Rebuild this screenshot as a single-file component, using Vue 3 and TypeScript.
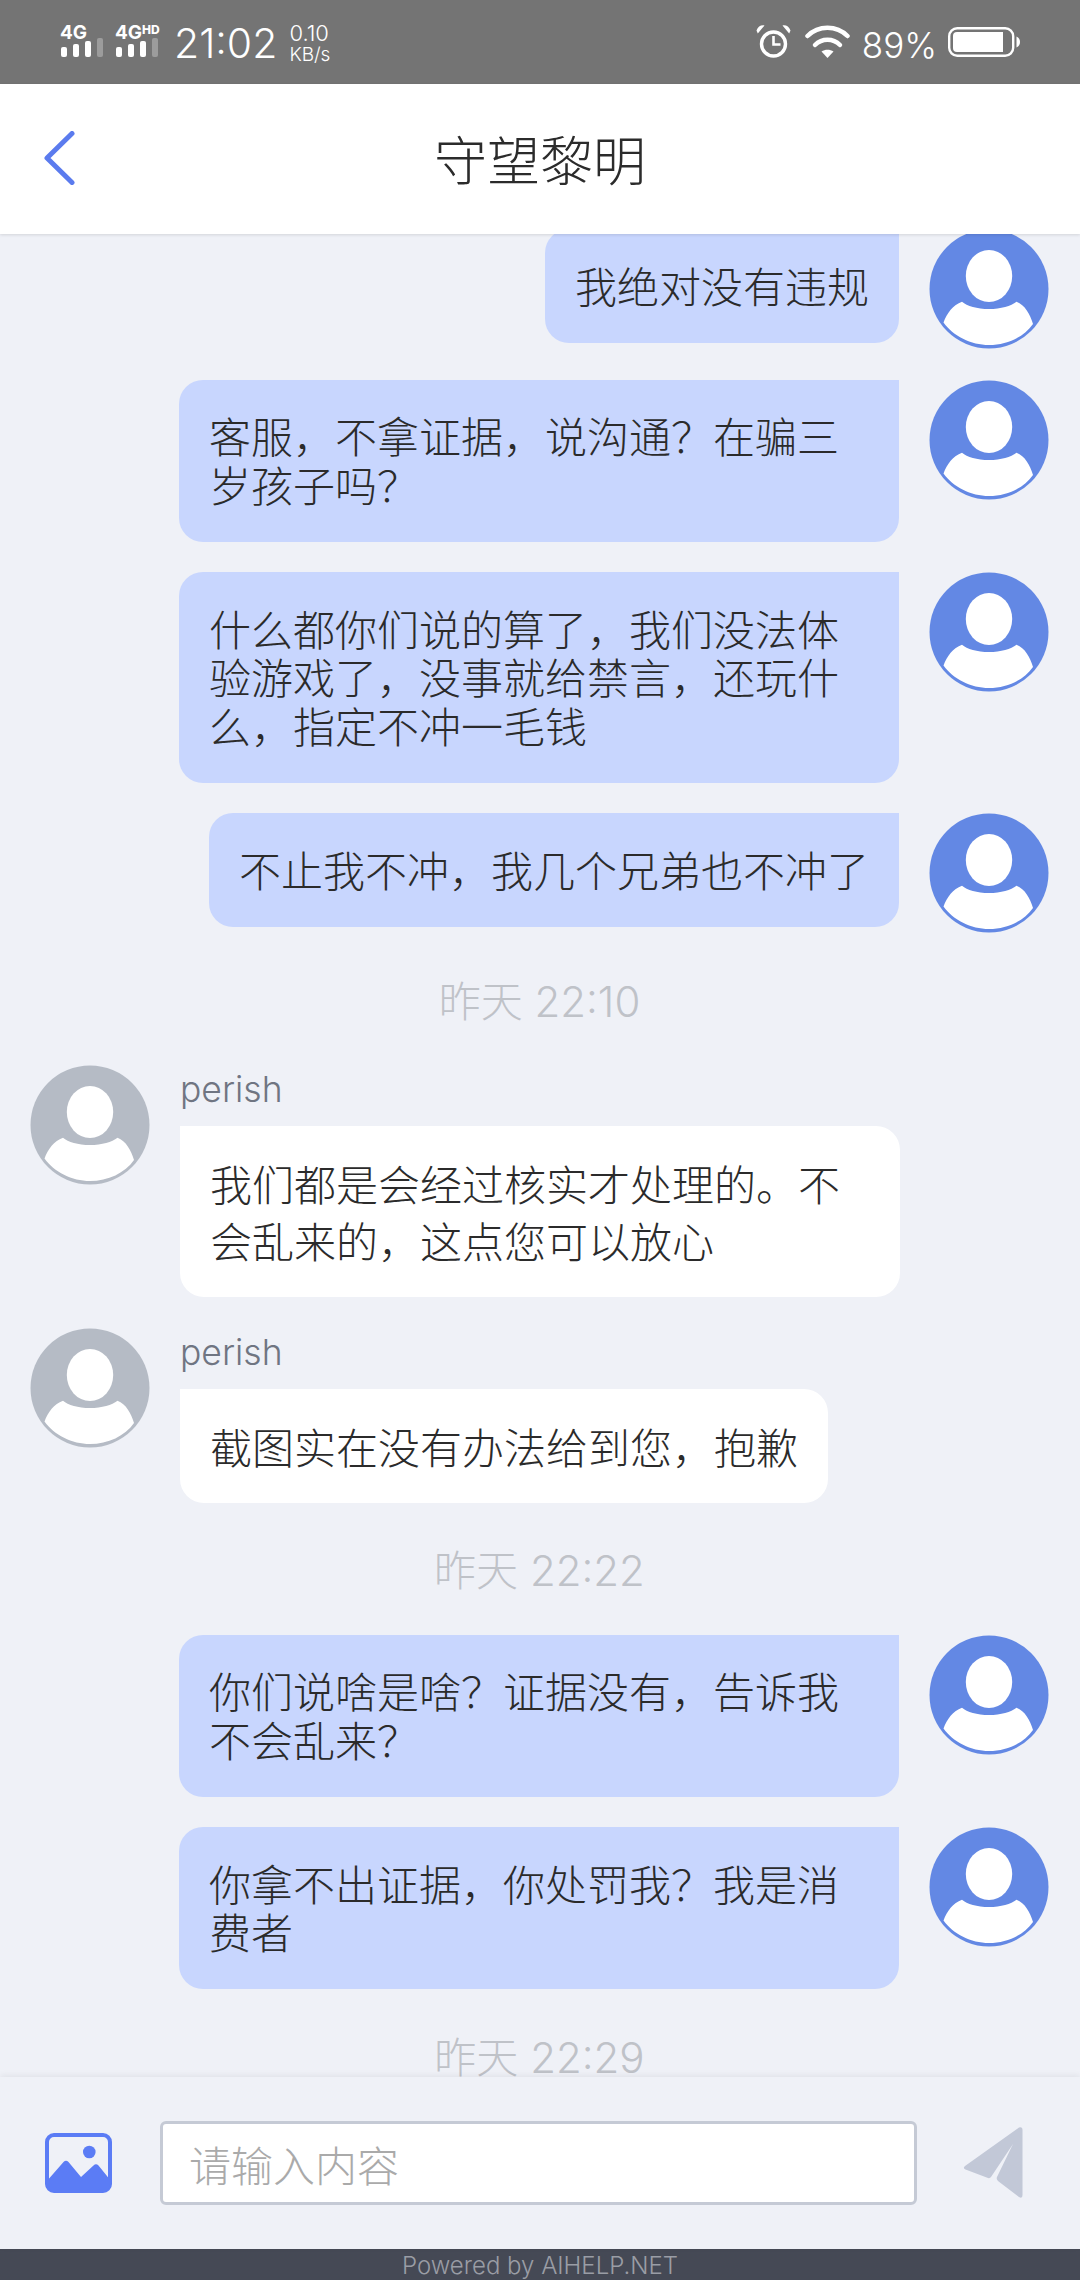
<script setup lang="ts">
interface ChatItem {
  kind: 'me' | 'agent' | 'time'
  text: string
}

const items: ChatItem[] = [
  { kind: 'me', text: '我绝对没有违规' },
  { kind: 'me', text: '客服，不拿证据，说沟通？在骗三岁孩子吗？' },
  { kind: 'me', text: '什么都你们说的算了，我们没法体验游戏了，没事就给禁言，还玩什么，指定不冲一毛钱' },
  { kind: 'me', text: '不止我不冲，我几个兄弟也不冲了' },
  { kind: 'time', text: '昨天 22:10' },
  { kind: 'agent', text: '我们都是会经过核实才处理的。不会乱来的，这点您可以放心' },
  { kind: 'agent', text: '截图实在没有办法给到您，抱歉' },
  { kind: 'time', text: '昨天 22:22' },
  { kind: 'me', text: '你们说啥是啥？证据没有，告诉我不会乱来？' },
  { kind: 'me', text: '你拿不出证据，你处罚我？我是消费者' },
  { kind: 'time', text: '昨天 22:29' },
]

const signals = [
  { label: '4G', sup: '' },
  { label: '4G', sup: 'HD' },
]
</script>

<template>
  <div class="screen">
    <div class="status">
      <div v-for="s in signals" :key="s.label + s.sup" class="signal">
        <div class="net">{{ s.label }}<span class="net-sup">{{ s.sup }}</span></div>
        <div class="bars">
          <i class="b1"></i><i class="b2"></i><i class="b3"></i><i class="b4"></i>
        </div>
      </div>
      <span class="clock">21:02</span>
      <div class="speed"><span>0.10</span><span class="unit">KB/s</span></div>
      <div class="status-right">
        <svg class="alarm" width="35" height="34" viewBox="0 0 35 34">
          <circle cx="17.5" cy="20" r="12" fill="none" stroke="#fff" stroke-width="3.4" />
          <path d="M17.5 12v8.5h7" fill="none" stroke="#fff" stroke-width="2.6" />
          <path d="M0.5 6.5C2 2.5 5 0.8 8.5 1.5L1.8 9.5z M34.5 6.5C33 2.5 30 0.8 26.5 1.5L33.2 9.5z" fill="#fff" />
        </svg>
        <svg class="wifi" width="45" height="33" viewBox="0 0 45 33">
          <path d="M2.500 11C13.500 0 31.500 0 42.500 11" fill="none" stroke="#fff" stroke-width="4.500" stroke-linecap="round" />
          <path d="M10 20C17 13 28 13 35 20" fill="none" stroke="#fff" stroke-width="4.500" stroke-linecap="round" />
          <path d="M16.500 26.500C20 24 25 24 28.500 26.500L22.500 33z" fill="#fff" />
        </svg>
        <span class="percent">89%</span>
        <svg class="battery" width="72" height="30" viewBox="0 0 72 30">
          <rect x="1.2" y="1.2" width="64" height="27.6" rx="8" fill="none" stroke="#fff" stroke-width="2.4" />
          <path d="M5 9a4 4 0 0 1 4-4h46v20H9a4 4 0 0 1-4-4z" fill="#fff" />
          <path d="M68.5 9.5c2.4 1 3.5 3 3.5 5.5s-1.100 4.500-3.500 5.500z" fill="#fff" />
        </svg>
      </div>
    </div>

    <header class="topbar">
      <svg class="back" width="31" height="54" viewBox="0 0 31 54">
        <path d="M28 2.500 3 27l25 24.500" fill="none" stroke="#5b7bee" stroke-width="5" stroke-linecap="round" stroke-linejoin="round" />
      </svg>
      <h1 class="title">守望黎明</h1>
    </header>

    <main class="chat">
      <div class="chat-inner">
        <template v-for="(item, i) in items" :key="i">
          <div v-if="item.kind === 'time'" class="time">{{ item.text }}</div>
          <div v-else-if="item.kind === 'me'" class="row row-me">
            <div class="bubble bubble-me">{{ item.text }}</div>
            <svg class="avatar" width="120" height="120" viewBox="0 0 120 120">
              <circle cx="60" cy="60" r="59.500" fill="#6388e4" />
              <ellipse cx="60" cy="47" rx="23.200" ry="26" fill="#fff" />
              <path d="M14.500 93.500C18 84 24 76 33 72.700 38 77 48 80 60 80s22-3 27.500-7.300C96 76 101 85 104 95 95 108 78 116 60 116S24 107 14.500 93.500z" fill="#fff" />
            </svg>
          </div>
          <div v-else class="row row-agent">
            <svg class="avatar" width="120" height="120" viewBox="0 0 120 120">
              <circle cx="60" cy="60" r="59.500" fill="#b5bbc5" />
              <ellipse cx="60" cy="47" rx="23.200" ry="26" fill="#fff" />
              <path d="M14.500 93.500C18 84 24 76 33 72.700 38 77 48 80 60 80s22-3 27.500-7.300C96 76 101 85 104 95 95 108 78 116 60 116S24 107 14.500 93.500z" fill="#fff" />
            </svg>
            <div class="agent-col">
              <div class="name">perish</div>
              <div class="bubble bubble-agent">{{ item.text }}</div>
            </div>
          </div>
        </template>
      </div>
    </main>

    <footer class="composer">
      <svg class="pic" width="68" height="60" viewBox="0 0 68 60">
        <rect x="2" y="2" width="63" height="56" rx="7" fill="none" stroke="#5b7cf5" stroke-width="4" />
        <circle cx="44.300" cy="19" r="6.300" fill="#5b7cf5" />
        <path d="M3 46.700 18.500 29q2.500-2.500 5 0L36 44l12.500-11.500q2.500-2.500 5 0L65 46.700V51a8 8 0 0 1-8 8H11a8 8 0 0 1-8-8z" fill="#5b7cf5" />
      </svg>
      <input class="input" type="text" placeholder="请输入内容" />
      <svg class="send" width="60" height="72" viewBox="0 0 60 72">
        <path d="M56 0.500Q59.500-.5 59.500 3L59.500 68Q59.500 72 56 70L35 54Q33 52 34 50L50 17 28 50Q27 51.500 25 51L2.500 42.500Q-.5 41 2 39Z" fill="#c2c8d7" />
      </svg>
    </footer>
    <div class="powered">Powered by AIHELP.NET</div>
  </div>
</template>

<style scoped>
.screen {
  display: flex;
  flex-direction: column;
  width: 1080px;
  height: 2280px;
  overflow: hidden;
  background: #eff1f7;
  font-family: "Noto Sans CJK SC", "Noto Sans", sans-serif;
  color: #2b2b2b;
}

.status {
  display: flex;
  align-items: flex-start;
  flex: none;
  height: 84px;
  padding: 22px 60px 0 60px;
  box-sizing: border-box;
  background: #747474;
  color: #fff;
  font-family: Inter, Roboto, sans-serif;
}

.signal {
  width: 55px;
}

.signal + .signal {
  width: 59px;
}

.net {
  height: 15px;
  font-size: 19px;
  line-height: 15px;
  font-weight: 700;
  white-space: nowrap;
}

.net-sup {
  font-size: 12px;
  vertical-align: 5px;
  font-weight: 800;
}

.bars {
  display: flex;
  align-items: flex-end;
  gap: 6px;
  height: 20px;
  padding-left: 1px;
}

.bars i {
  width: 6px;
  border-radius: 2px;
  background: #fff;
}

.bars .b1 { height: 10px; }
.bars .b2 { height: 13px; }
.bars .b3 { height: 16px; }
.bars .b4 { height: 19px; background: #9c9c9c; }

.clock {
  font-size: 41px;
  line-height: 42px;
  font-weight: 300;
}

.speed {
  display: flex;
  flex-direction: column;
  margin-left: 12px;
  font-size: 22px;
  line-height: 22px;
  font-weight: 300;
}

.unit {
  font-size: 19px;
}

.status-right {
  display: flex;
  align-items: flex-start;
  margin-left: auto;
  margin-top: 2px;
}

.wifi {
  margin-left: 14px;
  margin-top: 1px;
}

.percent {
  margin-left: 12px;
  margin-top: 3px;
  font-size: 35px;
  line-height: 36px;
  font-weight: 300;
}

.battery {
  margin-left: 11px;
  margin-top: 3px;
}

.topbar {
  position: relative;
  z-index: 2;
  display: flex;
  align-items: center;
  justify-content: center;
  flex: none;
  height: 150px;
  background: #fff;
  box-shadow: 0 1px 3px rgba(0, 0, 0, 0.12);
}

.back {
  position: absolute;
  left: 44px;
  top: 47px;
}

.title {
  margin: 0 0 2px;
  font-size: 53px;
  font-weight: 300;
  color: #2b2b2b;
}

.chat {
  flex: 1;
  min-height: 0;
  overflow: hidden;
}

.chat-inner {
  display: flex;
  flex-direction: column;
  gap: 30.5px;
  margin-top: -5px;
  padding: 0 31px 0 30px;
}

.row {
  display: flex;
  align-items: flex-start;
  gap: 30px;
}

.row-me {
  justify-content: flex-end;
}

.avatar {
  flex: none;
}

.bubble {
  max-width: 720px;
  box-sizing: border-box;
  font-size: 42px;
  font-weight: 300;
  color: #2b2b2b;
}

.bubble-me {
  padding: 31.5px 30px 33.5px;
  line-height: 48.5px;
  background: #c8d6fe;
  border-radius: 24px 0 24px 24px;
}

.bubble-agent {
  padding: 28px 30px 29px;
  line-height: 57px;
  background: #fff;
  border-radius: 0 24px 24px 24px;
}

.agent-col {
  display: flex;
  flex-direction: column;
  align-items: flex-start;
}

.name {
  height: 61px;
  font-family: Inter, Roboto, sans-serif;
  font-size: 35.5px;
  line-height: 50px;
  font-weight: 300;
  color: #6f7582;
}

.time {
  height: 71px;
  line-height: 76px;
  text-align: center;
  font-family: Inter, "Noto Sans CJK SC", sans-serif;
  font-size: 42px;
  font-weight: 300;
  color: #bfc2c8;
}

.composer {
  position: relative;
  z-index: 2;
  display: flex;
  align-items: center;
  flex: none;
  height: 172px;
  padding: 0 57px 0 45px;
  box-sizing: border-box;
  background: #eff1f7;
  box-shadow: 0 -2px 6px rgba(0, 0, 0, 0.06);
}

.input {
  flex: 1;
  min-width: 0;
  height: 84px;
  margin: 0 46px 0 47px;
  padding: 0 26px;
  box-sizing: border-box;
  border: 3px solid #c5cad5;
  border-radius: 6px;
  background: #fff;
  font-family: inherit;
  font-size: 42px;
  font-weight: 300;
  outline: none;
}

.input::placeholder {
  color: #aaa;
}

.send {
  flex: none;
}

.pic {
  flex: none;
}

.powered {
  flex: none;
  height: 31px;
  background: #454955;
  color: #9a9da5;
  font-family: Inter, Roboto, sans-serif;
  font-size: 24px;
  font-weight: 300;
  line-height: 33px;
  text-align: center;
}
</style>
